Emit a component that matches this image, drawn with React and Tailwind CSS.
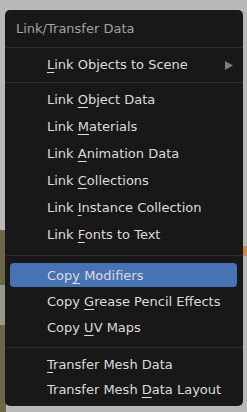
import React from 'react';

const font = { fontFamily: '"DejaVu Sans", "Liberation Sans", sans-serif' };

function Item({ pre, key1, post, active, arrow, h = 'h-[27px]' }) {
  return (
    <div className={`relative flex items-center ${h}`}>
      {active && (
        <div className="absolute left-[5px] right-[6px] top-[0px] bottom-[1px] rounded-[4px] bg-[#4772b3]" />
      )}
      <span className="relative pl-[42px] text-[13px] text-[#dcdcdc] whitespace-nowrap">
        {pre}
        <span className="underline decoration-1 underline-offset-[3px]">{key1}</span>
        {post}
      </span>
      {arrow && (
        <svg className="absolute right-[10px]" width="8" height="9" viewBox="0 0 8 9">
          <polygon points="0,0 8,4.5 0,9" fill="#7c7c7c" />
        </svg>
      )}
    </div>
  );
}

function Sep({ my }) {
  return <div className={`h-px bg-[#2e2e2e] ${my}`} />;
}

export default function App() {
  return (
    <div className="relative w-[247px] h-[412px] bg-[#b9b9b9] overflow-hidden" style={font}>
      <div className="absolute left-0 top-[230px] w-[6px] h-[182px] bg-[#6b6748]" />
      <div className="absolute left-0 top-[285px] w-[6px] h-[40px] bg-[#9a988a]" />
      <div className="absolute right-0 top-[246px] w-[6px] h-[10px] bg-[#c98a4a]" />
      <div className="relative ml-[5px] mt-[10px] w-[238px] h-[396px] rounded-[5px] bg-[#181818] flex flex-col">
        <div className="h-[37px] flex items-center pl-[11px] text-[13px] text-[#a3a3a3]">Link/Transfer Data</div>
        <Sep my="" />
        <Item pre="" key1="L" post="ink Objects to Scene" arrow h="h-[34px]" />
        <Sep my="" />
        <div className="pt-[3px]">
          <Item pre="Link " key1="O" post="bject Data" />
          <Item pre="Link " key1="M" post="aterials" />
          <Item pre="Link " key1="A" post="nimation Data" />
          <Item pre="Link " key1="C" post="ollections" />
          <Item pre="Link " key1="I" post="nstance Collection" />
          <Item pre="Link " key1="F" post="onts to Text" />
        </div>
        <Sep my="mt-[7px] mb-[7px]" />
        <Item pre="Cop" key1="y" post=" Modifiers" active h="h-[25px]" />
        <Item pre="Copy " key1="G" post="rease Pencil Effects" h="h-[27px]" />
        <Item pre="Copy " key1="U" post="V Maps" h="h-[25px]" />
        <Sep my="mt-[7px] mb-[4px]" />
        <Item pre="" key1="T" post="ransfer Mesh Data" h="h-[25px]" />
        <Item pre="Transfer Mesh " key1="D" post="ata Layout" h="h-[25px]" />
      </div>
    </div>
  );
}
